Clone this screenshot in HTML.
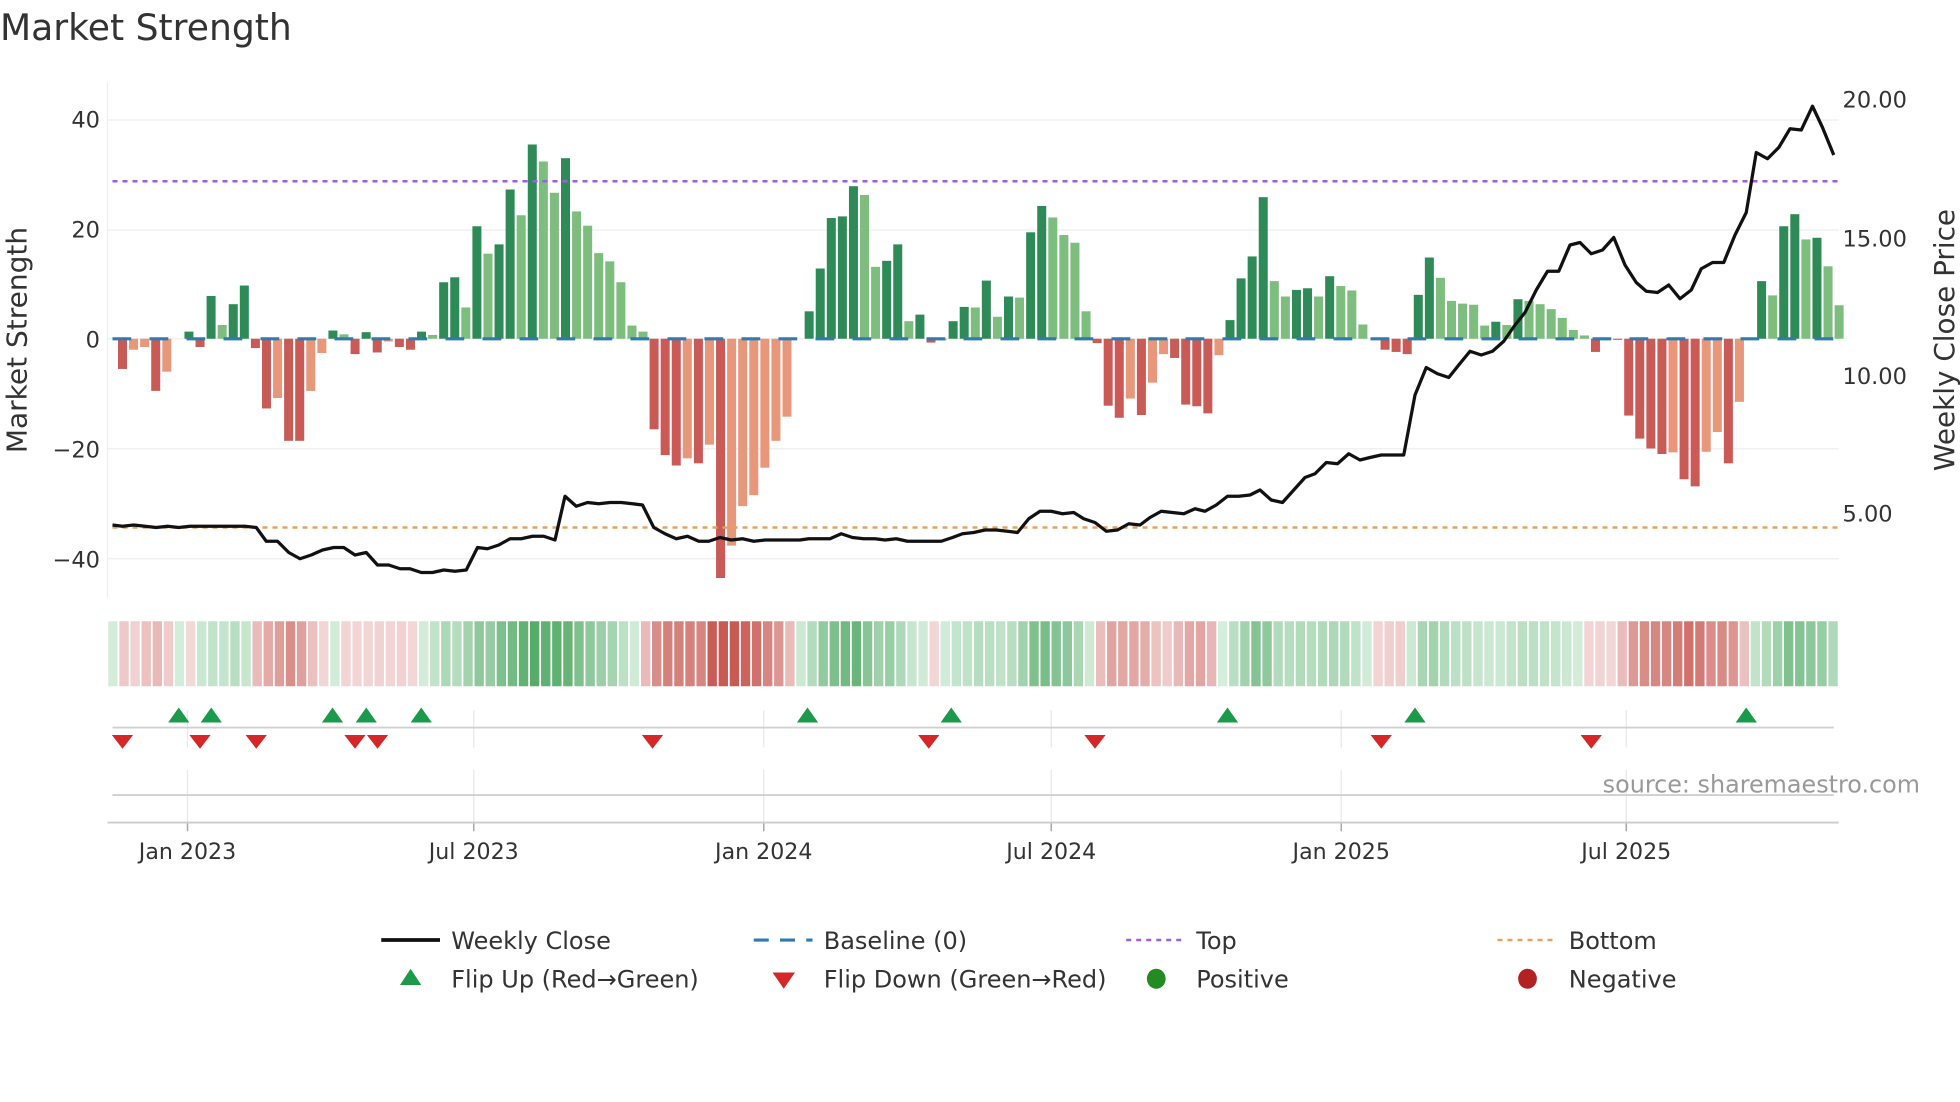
<!DOCTYPE html>
<html><head><meta charset="utf-8">
<style>
html,body{margin:0;padding:0;background:#fff;width:1960px;height:1102px;overflow:hidden}
svg{display:block}
text{font-family:"DejaVu Sans","Liberation Sans",sans-serif;fill:#333}
</style></head>
<body>
<svg id="s" width="1960" height="1102" viewBox="0 0 1568 881.6" preserveAspectRatio="none" xmlns="http://www.w3.org/2000/svg">
<rect width="1568" height="881.6" fill="#fff"/>
<text x="0" y="32" font-size="28.9">Market Strength</text>
<g id="grid"></g>
<line x1="86" y1="66" x2="86" y2="478" stroke="#eee" stroke-width="1"/>
<g id="bars"></g>
<line x1="90" y1="271" x2="1470" y2="271" stroke="#2f7bb0" stroke-width="2.5" stroke-dasharray="15 14.6"/>
<line x1="90" y1="145" x2="1470" y2="145" stroke="#9b5fe0" stroke-width="2" stroke-dasharray="4 4"/>
<line x1="90" y1="422" x2="1470" y2="422" stroke="#e8a060" stroke-width="2" stroke-dasharray="4 4"/>
<polyline id="price" fill="none" stroke="#111" stroke-width="2.6" stroke-linejoin="round"/>
<g font-size="18" text-anchor="end">
<text x="80" y="102">40</text><text x="80" y="190">20</text><text x="80" y="278">0</text><text x="80" y="366">−20</text><text x="80" y="454">−40</text>
</g>
<g font-size="18">
<text x="1474" y="86">20.00</text><text x="1474" y="197">15.00</text><text x="1474" y="307">10.00</text><text x="1474" y="417">5.00</text>
</g>
<text transform="translate(21,272) rotate(-90)" font-size="22.4" text-anchor="middle">Market Strength</text>
<text transform="translate(1563,272) rotate(-90)" font-size="22.3" text-anchor="middle">Weekly Close Price</text>
<g id="heat"></g>
<g id="vg"></g>
<line x1="90" y1="582" x2="1467" y2="582" stroke="#d0d0d0" stroke-width="1.5"/>
<line x1="90" y1="636" x2="1467" y2="636" stroke="#d0d0d0" stroke-width="1.5"/>
<line x1="86" y1="658" x2="1471" y2="658" stroke="#ccc" stroke-width="1.5"/>
<g id="marks"></g>
<g font-size="17.7" text-anchor="middle" id="xl">
<text x="150" y="687">Jan 2023</text><text x="379" y="687">Jul 2023</text><text x="611" y="687">Jan 2024</text><text x="841" y="687">Jul 2024</text><text x="1073" y="687">Jan 2025</text><text x="1301" y="687">Jul 2025</text>
</g>
<text x="1536" y="634" font-size="19.1" text-anchor="end" style="fill:#999">source: sharemaestro.com</text>
<g font-size="19.2">
<line x1="305" y1="752" x2="352" y2="752" stroke="#111" stroke-width="3"/>
<text x="361" y="759">Weekly Close</text>
<line x1="603" y1="752" x2="650" y2="752" stroke="#2f7bb0" stroke-width="2.5" stroke-dasharray="12 9"/>
<text x="659" y="759">Baseline (0)</text>
<line x1="901" y1="752" x2="948" y2="752" stroke="#9b5fe0" stroke-width="2" stroke-dasharray="4 4"/>
<text x="957" y="759">Top</text>
<line x1="1198" y1="752" x2="1245" y2="752" stroke="#e8a060" stroke-width="2" stroke-dasharray="4 4"/>
<text x="1255" y="759">Bottom</text>
<polygon points="320,788 337,788 328.5,775" fill="#1a9a4a"/>
<text x="361" y="790">Flip Up (Red→Green)</text>
<polygon points="618,778 636,778 627,791" fill="#d62728"/>
<text x="659" y="790">Flip Down (Green→Red)</text>
<ellipse cx="925" cy="783" rx="7.5" ry="8" fill="#228b22"/>
<text x="957" y="790">Positive</text>
<ellipse cx="1222" cy="783" rx="7.5" ry="8" fill="#b22222"/>
<text x="1255" y="790">Negative</text>
</g>
</svg>
<script>
var V=[-5.5,-2,-1.5,-9.5,-6,0,1.3,-1.5,7.8,2.5,6.3,9.7,-1.7,-12.7,-10.8,-18.6,-18.6,-9.5,-2.6,1.5,0.8,-2.8,1.2,-2.5,-0.5,-1.5,-2,1.3,0.7,10.3,11.2,5.7,20.5,15.5,17.2,27.2,22.5,35.4,32.3,26.6,32.9,23.2,20.6,15.6,14.1,10.3,2.4,1.3,-16.5,-21.2,-23.1,-21.8,-22.7,-19.3,-43.6,-37.7,-30.5,-28.5,-23.5,-18.6,-14.2,0,5,12.8,22,22.3,27.8,26.2,13.1,14.2,17.2,3.2,4.4,-0.7,-0.3,3.2,5.8,5.7,10.6,4,7.7,7.5,19.4,24.2,22.1,18.9,17.5,5,-0.8,-12.2,-14.4,-10.9,-13.9,-8,-2.8,-3.5,-12,-12.3,-13.6,-3,3.4,11,15,25.8,10.5,7.7,8.9,9.2,7.7,11.4,9.6,8.8,2.6,0,-2,-2.4,-2.8,8,14.8,11.1,6.9,6.4,6.2,2.4,3.1,2.5,7.2,6.9,6.3,5.4,3.8,1.6,0.6,-2.4,-0.1,-0.2,-14,-18.2,-20,-21,-20.7,-25.6,-26.9,-20.6,-17,-22.7,-11.5,0,10.5,7.9,20.5,22.7,18.1,18.4,13.2,6.1];
var ns="http://www.w3.org/2000/svg";
function el(p,t,a){var e=document.createElementNS(ns,t);for(var k in a)e.setAttribute(k,a[k]);document.getElementById(p).appendChild(e);return e;}
[96,184,271,359,447].forEach(function(y){el("grid","line",{x1:86,y1:y,x2:1471,y2:y,stroke:"#eef0f4","stroke-width":1.2});});
var u=4.39;
for(var i=0;i<V.length;i++){
  var x=98+i*8.86, v=V[i], prev=i>0?V[i-1]:0, c;
  if(v>=0) c=(v>=prev)?"#2e8b57":"#7dbd7e"; else c=(v<=prev)?"#c95a56":"#e8977a";
  var h=Math.abs(v)*u; if(h<0.5)continue;
  el("bars","rect",{x:x-3.6,y:v>=0?271-h:271,width:7.2,height:h,fill:c});
}
function mix(c1,c2,t){return "rgb("+[0,1,2].map(function(k){return Math.round(c1[k]+(c2[k]-c1[k])*t)}).join(",")+")";}
for(var i=0;i<V.length;i++){
  var b=i>=1?V[i-1]:0.5,d=i>=1?V[i]:0.5;
  var m=(b+d)/2, t=Math.min(1,Math.abs(m)/32), col;
  if(m>=0) col=mix([214,238,221],[86,172,104],t); else col=mix([243,216,216],[200,90,82],t);
  var x0=86+i*(1385/156);
  el("heat","rect",{x:x0+0.6,y:497,width:1385/156-1.4,height:52,fill:col});
}
[150,379,611,841,1073,1301].forEach(function(x){
  el("vg","line",{x1:x,y1:568,x2:x,y2:598,stroke:"#e6e8ee","stroke-width":1});
  el("vg","line",{x1:x,y1:616,x2:x,y2:658,stroke:"#e6e8ee","stroke-width":1});
  el("vg","line",{x1:x,y1:658,x2:x,y2:665,stroke:"#aaa","stroke-width":1.2});
});
[143,169,266,293,337,646,761,982,1132,1397].forEach(function(x){
  el("marks","polygon",{points:(x-8.5)+",578 "+(x+8.5)+",578 "+x+",566",fill:"#1a9a4a"});
});
[98,160,205,284,302,522,743,876,1105,1273].forEach(function(x){
  el("marks","polygon",{points:(x-8.5)+",588 "+(x+8.5)+",588 "+x+",599",fill:"#d62728"});
});
var P=[[90,420],[98,421],[107,420],[116,421],[125,422],[134,421],[143,422],[152,421],[169,421],[196,421],[205,422],[213,433],[222,433],[231,442],[240,447],[249,444],[258,440],[267,438],[275,438],[284,444],[293,442],[302,452],[311,452],[320,455],[328,455],[337,458],[346,458],[355,456],[364,457],[373,456],[382,438],[390,439],[399,436],[408,431],[417,431],[426,429],[435,429],[444,432],[452,397],[461,405],[470,402],[479,403],[488,402],[497,402],[506,403],[514,404],[523,422],[532,427],[541,431],[550,429],[559,433],[567,433],[576,430],[585,432],[594,431],[603,433],[612,432],[640,432],[647,431],[664,431],[673,427],[682,430],[691,431],[700,431],[708,432],[717,431],[726,433],[753,433],[762,430],[770,427],[779,426],[788,424],[797,424],[806,425],[814,426],[823,415],[832,409],[841,409],[850,411],[859,410],[867,415],[876,418],[885,425],[894,424],[903,419],[912,420],[920,414],[929,409],[938,410],[947,411],[956,407],[964,409],[973,404],[982,397],[991,397],[1000,396],[1008,392],[1017,400],[1026,402],[1035,392],[1044,382],[1052,379],[1061,370],[1070,371],[1079,363],[1088,368],[1096,366],[1105,364],[1123,364],[1132,316],[1141,294],[1150,299],[1159,302],[1167,292],[1176,281],[1185,284],[1194,281],[1203,273],[1212,260],[1220,250],[1229,232],[1238,217],[1247,217],[1256,196],[1264,194],[1273,203],[1282,200],[1291,190],[1300,212],[1309,226],[1317,233],[1326,234],[1335,228],[1344,239],[1353,232],[1361,215],[1370,210],[1379,210],[1388,188],[1397,170],[1405,122],[1414,127],[1423,118],[1432,103],[1441,104],[1450,85],[1458,102],[1467,124]];
document.getElementById("price").setAttribute("points",P.map(function(p){return p.join(",")}).join(" "));
</script>
</body></html>
